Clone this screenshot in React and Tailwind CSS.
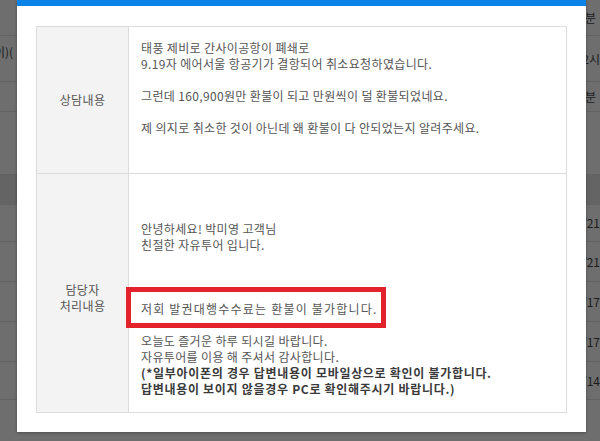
const bgRows = [
  { h: 'h-[36px]', left: '', right: '0분', rightPad: 'pr-[4px]' },
  { h: 'h-[46px]', left: '이)(\n)', right: '2시', rightPad: 'pr-0' },
  { h: 'h-[30px]', left: '', right: '0분', rightPad: 'pr-[4px]' },
  { h: 'h-[63px]', left: '', right: '', rightPad: '' },
  { h: 'h-[30px]', left: '', right: '', rightPad: '', dark: true },
  { h: 'h-[37px]', left: '', right: '/21', rightPad: 'pr-0' },
  { h: 'h-[40px]', left: '', right: '/21', rightPad: 'pr-0' },
  { h: 'h-[40px]', left: '', right: '/17', rightPad: 'pr-0' },
  { h: 'h-[40px]', left: '', right: '/17', rightPad: 'pr-0' },
  { h: 'h-[38px]', left: '', right: '/14', rightPad: 'pr-0' },
];

const question = [
  '태풍 제비로 간사이공항이 폐쇄로',
  '9.19자 에어서울 항공기가 결항되어 취소요청하였습니다.',
  '',
  '그런데 160,900원만 환불이 되고 만원씩이 덜 환불되었네요.',
  '',
  '제 의지로 취소한 것이 아닌데 왜 환불이 다 안되었는지 알려주세요.',
];

function Line({ children, bold, wide }) {
  let style = 'tracking-[0.35px]';
  if (bold) style = 'font-bold text-[#3a3a3a] tracking-[0.7px]';
  if (wide) style = 'tracking-[1.2px]';
  return (
    <div className={`h-[16px] leading-[16px] whitespace-nowrap ${style}`}>
      {children || '\u00a0'}
    </div>
  );
}

export default function App() {
  return (
    <div className="relative w-[600px] h-[441px] overflow-hidden bg-[#6e6e6e] font-['Noto_Sans_CJK_KR',sans-serif] text-[12px]">
      {/* Dimmed page behind the modal */}
      <div className="flex flex-col text-[#1c1c1c]">
        {bgRows.map((r, i) => (
          <div
            key={i}
            className={`${r.h} flex items-center justify-between border-b border-[#626262] ${r.dark ? 'bg-[#646464]' : ''}`}
          >
            <div className="ml-[-6px] leading-[15px] whitespace-pre">{r.left}</div>
            <div className={`${r.rightPad} whitespace-nowrap`}>{r.right}</div>
          </div>
        ))}
      </div>

      {/* Modal */}
      <div className="absolute left-[17px] top-0 w-[569px] h-[432px] bg-white border-t-[6px] border-[#0b83e6] px-[19px] pt-[20px] shadow-[0_1px_3px_rgba(0,0,0,0.3)]">
        <div className="border border-[#dcdcdc] text-[#555]">
          {/* 상담내용 */}
          <div className="grid grid-cols-[92px_1fr] h-[147px] border-b border-[#dcdcdc]">
            <div className="bg-[#f3f3f3] border-r border-[#dcdcdc] flex items-center justify-center tracking-[0.35px]">
              상담내용
            </div>
            <div className="pl-[12px] pt-[13px]">
              {question.map((t, i) => (
                <Line key={i}>{t}</Line>
              ))}
            </div>
          </div>

          {/* 담당자 처리내용 */}
          <div className="grid grid-cols-[92px_1fr] h-[238px]">
            <div className="bg-[#f3f3f3] border-r border-[#dcdcdc] flex flex-col items-center justify-center leading-[16px] pt-[10px] tracking-[0.35px]">
              <div>담당자</div>
              <div>처리내용</div>
            </div>
            <div className="pl-[12px] pt-[15px]">
              <Line />
              <Line />
              <Line>안녕하세요! 박미영 고객님</Line>
              <Line>친절한 자유투어 입니다.</Line>
              <Line />
              <Line />
              <Line />
              <div className="relative">
                <Line wide>저회 발권대행수수료는 환불이 불가합니다.</Line>
                <span className="absolute left-[-15px] top-[-14px] w-[260px] h-[41px] border-[5px] border-[#e3222b]" />
              </div>
              <Line />
              <Line>오늘도 즐거운 하루 되시길 바랍니다.</Line>
              <Line>자유투어를 이용 해 주셔서 감사합니다.</Line>
              <Line bold>(*일부아이폰의 경우 답변내용이 모바일상으로 확인이 불가합니다.</Line>
              <Line bold>답변내용이 보이지 않을경우 PC로 확인해주시기 바랍니다.)</Line>
            </div>
          </div>
        </div>
      </div>
    </div>
  );
}
